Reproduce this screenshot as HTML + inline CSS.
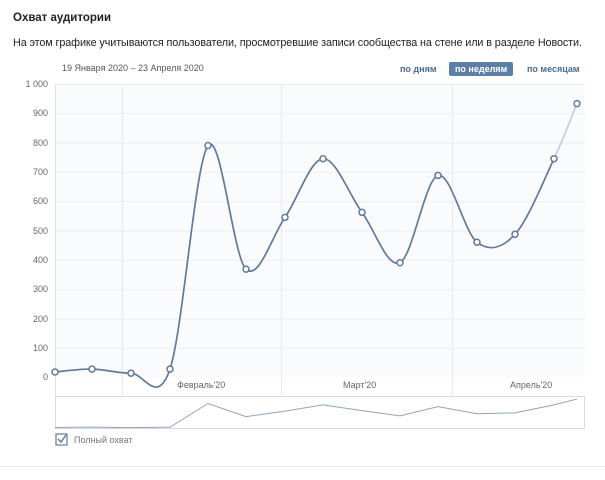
<!DOCTYPE html>
<html><head><meta charset="utf-8"><style>
body{margin:0;width:605px;height:480px;background:#fff;font-family:"Liberation Sans",sans-serif;overflow:hidden;position:relative}
.t{position:absolute;left:13px;top:12px;font-size:11.5px;font-weight:bold;color:#222}
.d{position:absolute;left:13px;top:37px;font-size:10.8px;color:#222;white-space:nowrap;letter-spacing:-0.1px}
.r{position:absolute;left:62px;top:63px;font-size:9px;color:#555}
.b{position:absolute;top:64px;font-size:9px;font-weight:bold;color:#4a6a91}
.sel{background:#5b7fa6;color:#fff;padding:2px 6px;border-radius:2px;top:62px}
.y{position:absolute;right:557px;font-size:9px;color:#666;text-align:right}
.x{position:absolute;top:380px;font-size:9px;color:#666}
</style></head><body>
<div class="t">Охват аудитории</div>
<div class="d">На этом графике учитываются пользователи, просмотревшие записи сообщества на стене или в разделе Новости.</div>
<div class="r">19 Января 2020 – 23 Апреля 2020</div>
<div class="b" style="left:400px">по дням</div>
<div class="b sel" style="left:449px">по неделям</div>
<div class="b" style="left:527px">по месяцам</div>
<svg width="605" height="480" style="position:absolute;left:0;top:0" id="s">
<rect x="55" y="84" width="530" height="293" fill="#fafbfc"/>
<g stroke="#eceef2" stroke-width="1" id="g"></g>
<line x1="122.5" y1="84" x2="122.5" y2="396" stroke="#e6e9ee"/>
<line x1="281.5" y1="84" x2="281.5" y2="396" stroke="#e6e9ee"/>
<line x1="452.5" y1="84" x2="452.5" y2="396" stroke="#e6e9ee"/>
<line x1="55.5" y1="84" x2="55.5" y2="396" stroke="#dfe3e8"/>
<rect x="55.5" y="396.5" width="529" height="32" fill="#fff" stroke="#d5dbe2"/>
<path id="nav" fill="none" stroke="#8fa3bd" stroke-width="1"/>
<path id="main" fill="none" stroke="#5f7a9e" stroke-width="1.7"/>
<path id="last" fill="none" stroke="#c4cfdd" stroke-width="1.7"/>
<g id="pts"></g>
<rect x="56" y="434" width="11" height="11" fill="#fff" stroke="#5f7a9e" stroke-width="1.2"/>
<path d="M58 439 l3 3 l5 -7" fill="none" stroke="#5f7a9e" stroke-width="1.5"/>
<line x1="0" y1="466.5" x2="605" y2="466.5" stroke="#e7e8ec"/>
</svg>
<div class="y" style="top:79px">1 000</div><div class="y" style="top:108px">900</div>
<div class="y" style="top:138px">800</div><div class="y" style="top:167px">700</div>
<div class="y" style="top:196px">600</div><div class="y" style="top:226px">500</div>
<div class="y" style="top:255px">400</div><div class="y" style="top:284px">300</div>
<div class="y" style="top:314px">200</div><div class="y" style="top:343px">100</div>
<div class="y" style="top:372px">0</div>
<div class="x" style="left:177px">Февраль'20</div>
<div class="x" style="left:343px">Март'20</div>
<div class="x" style="left:510px">Апрель'20</div>
<div style="position:absolute;left:74px;top:435px;font-size:9px;color:#777">Полный охват</div>
<script>
var P=[[55,17],[92,27],[131,13],[170,27],[208,790],[246,368],[285,545],[323,745],[362,562],[400,390],[438,688],[477,460],[515,487],[554,745],[577,933]];
var g=document.getElementById('g'),h='';
for(var i=0;i<10;i++){var y=84.5+i*29.3;h+='<line x1="55" y1="'+y+'" x2="585" y2="'+y+'"/>';}
g.innerHTML=h;
var pts=P.map(p=>[p[0],377-p[1]*0.293]);
function seg(a,b,c,d){var k=1/6;return ' C'+(b[0]+(c[0]-a[0])*k)+' '+(b[1]+(c[1]-a[1])*k)+' '+(c[0]-(d[0]-b[0])*k)+' '+(c[1]-(d[1]-b[1])*k)+' '+c[0]+' '+c[1];}
var d='M'+pts[0][0]+' '+pts[0][1],n=pts.length;
for(var i=0;i<n-2;i++){d+=seg(pts[Math.max(i-1,0)],pts[i],pts[i+1],pts[Math.min(i+2,n-1)]);}
document.getElementById('main').setAttribute('d',d);
document.getElementById('last').setAttribute('d','M'+pts[n-2][0]+' '+pts[n-2][1]+seg(pts[n-3],pts[n-2],pts[n-1],pts[n-1]));
var c='';pts.forEach(p=>{c+='<circle cx="'+p[0]+'" cy="'+p[1]+'" r="3" fill="#fff" stroke="#5f7a9e" stroke-width="1.5"/>';});
document.getElementById('pts').innerHTML=c;
document.getElementById('nav').setAttribute('d','M'+P.map(p=>p[0]+' '+(428-p[1]*0.031)).join(' L'));
</script>
</body></html>
